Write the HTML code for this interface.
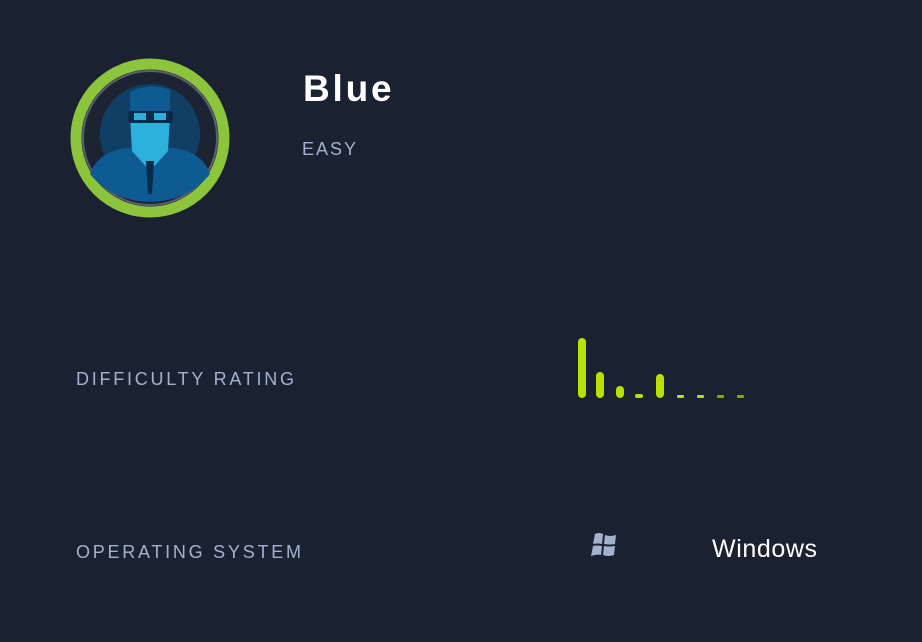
<!DOCTYPE html>
<html><head><style>
body{margin:0;width:922px;height:642px;background:#1a2232;font-family:"Liberation Sans",sans-serif;position:relative;overflow:hidden}
.a{position:absolute}
.lbl{color:#a4b1cd;font-size:18px;letter-spacing:2.75px}
.bar{position:absolute;width:8px;background:#b8e000;border-radius:4px}
</style></head><body>
<svg class="a" style="left:68px;top:56px" width="164" height="164" viewBox="0 0 164 164">
<circle cx="82" cy="82" r="74" fill="none" stroke="#8cc43c" stroke-width="11"/>
<circle cx="82" cy="82" r="67" fill="#1c2332" stroke="#5a6070" stroke-width="2"/>
<circle cx="82" cy="78" r="50" fill="#0d4a7a" opacity="0.7"/>
<path d="M22 118 Q30 95 60 92 L82 90 L104 92 Q134 95 142 118 Q120 145 82 146 Q44 145 22 118Z" fill="#0e5a92"/>
<path d="M62 60 L102 60 L100 95 L82 115 L64 95Z" fill="#2cb0dc"/>
<path d="M62 36 Q82 26 102 34 L102 55 L62 56Z" fill="#0e5a92"/>
<rect x="60" y="55" width="45" height="12" rx="3" fill="#0a2a4a"/>
<rect x="66" y="57" width="12" height="7" fill="#2cb0dc"/><rect x="86" y="57" width="12" height="7" fill="#2cb0dc"/>
<path d="M78 105 L86 105 L84 138 L80 138Z" fill="#0a2a4a"/>
</svg>
<div class="a" style="left:303px;top:68px;color:#fff;font-weight:bold;font-size:37px;letter-spacing:2.8px">Blue</div>
<div class="a" style="left:302px;top:139px;color:#a4b1cd;font-size:18px;letter-spacing:2px">EASY</div>
<div class="a lbl" style="left:76px;top:369px">DIFFICULTY RATING</div>
<div class="a lbl" style="left:76px;top:542px">OPERATING SYSTEM</div>
<div class="bar" style="left:578px;top:338px;height:60px"></div>
<div class="bar" style="left:596px;top:372px;height:26px"></div>
<div class="bar" style="left:616px;top:386px;height:12px"></div>
<div class="bar" style="left:635px;top:394px;height:4px"></div>
<div class="bar" style="left:656px;top:374px;height:24px"></div>
<div class="bar" style="left:677px;top:395px;height:3px;border-radius:1px;width:7px"></div>
<div class="bar" style="left:697px;top:395px;height:3px;border-radius:1px;width:7px"></div>
<div class="bar" style="left:717px;top:395px;height:3px;border-radius:1px;width:7px;opacity:.7"></div>
<div class="bar" style="left:737px;top:395px;height:3px;border-radius:1px;width:7px;opacity:.7"></div>
<svg class="a" style="left:591px;top:533px" width="26" height="24" viewBox="0 0 26 24">
<path d="M4 1 Q8 -1 12 1 L11 11 Q7 10 2 11Z M14 2 Q19 4 25 2 L24 11 Q19 12 13 11Z M2 13 Q6 12 11 13 L10 22 Q6 21 0 23Z M13 13 Q18 14 24 13 L23 22 Q17 24 12 22Z" fill="#a4b1cd"/>
</svg>
<div class="a" style="left:712px;top:535px;color:#fff;font-size:25px;letter-spacing:0.6px">Windows</div>
</body></html>
